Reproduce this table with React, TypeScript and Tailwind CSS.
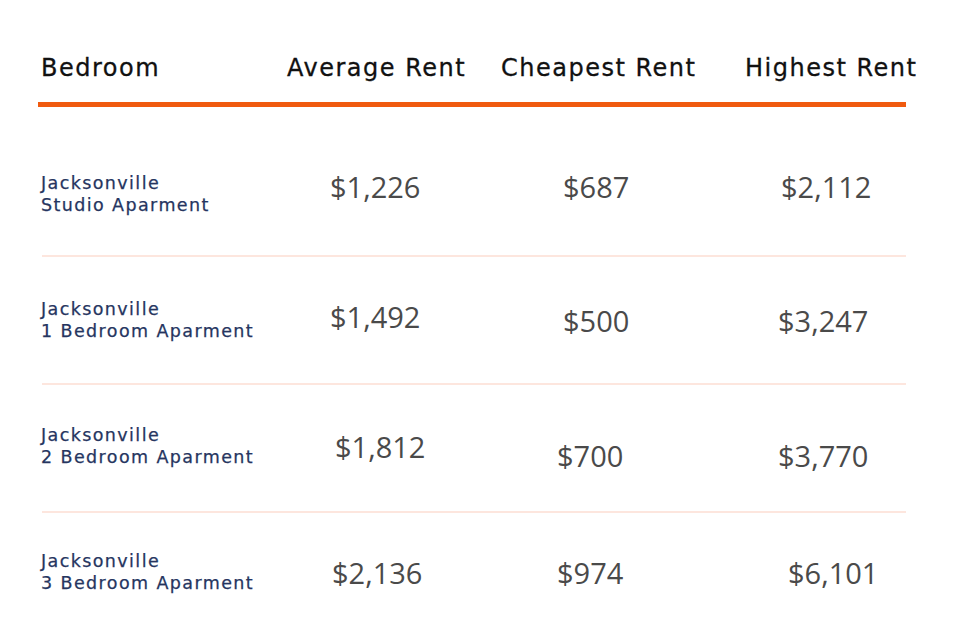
import React from "react";

type Cell = { v: string; ml: string; mt: string };
type Row = { h: string; pt: string; name: string; cells: Cell[] };

const rows: Row[] = [
  {
    h: "h-[148px]",
    pt: "pt-[65px]",
    name: "Studio Aparment",
    cells: [
      { v: "$1,226", ml: "ml-[43px]", mt: "mt-[62px]" },
      { v: "$687", ml: "ml-[62px]", mt: "mt-[62px]" },
      { v: "$2,112", ml: "ml-[36px]", mt: "mt-[62px]" },
    ],
  },
  {
    h: "h-[126px]",
    pt: "pt-[41px]",
    name: "1 Bedroom Aparment",
    cells: [
      { v: "$1,492", ml: "ml-[43px]", mt: "mt-[42px]" },
      { v: "$500", ml: "ml-[62px]", mt: "mt-[46px]" },
      { v: "$3,247", ml: "ml-[33px]", mt: "mt-[46px]" },
    ],
  },
  {
    h: "h-[126px]",
    pt: "pt-[39px]",
    name: "2 Bedroom Aparment",
    cells: [
      { v: "$1,812", ml: "ml-[48px]", mt: "mt-[44px]" },
      { v: "$700", ml: "ml-[56px]", mt: "mt-[53px]" },
      { v: "$3,770", ml: "ml-[33px]", mt: "mt-[53px]" },
    ],
  },
  {
    h: "h-[127px]",
    pt: "pt-[37px]",
    name: "3 Bedroom Aparment",
    cells: [
      { v: "$2,136", ml: "ml-[45px]", mt: "mt-[42px]" },
      { v: "$974", ml: "ml-[56px]", mt: "mt-[42px]" },
      { v: "$6,101", ml: "ml-[43px]", mt: "mt-[42px]" },
    ],
  },
];

const grid = "grid grid-cols-[246px_214px_244px_1fr]";
const sans = { fontFamily: '"DejaVu Sans", "Open Sans", sans-serif' };
const nums = { fontFamily: '"Open Sans", "Liberation Sans", sans-serif' };

export default function App() {
  return (
    <div className="w-[969px] h-[640px] bg-white overflow-hidden" style={sans}>
      <div
        className={`${grid} pl-[41px] pt-[50px] h-[102px] text-[24px] leading-[36px] tracking-[1.5px] text-[#111111] [-webkit-text-stroke:0.3px_#111111]`}
      >
        <div>Bedroom</div>
        <div>Average Rent</div>
        <div>Cheapest Rent</div>
        <div>Highest Rent</div>
      </div>
      <div className="ml-[38px] w-[868px] h-[5px] bg-[#f05a0f]" />
      {rows.map((r, i) => (
        <div key={i}>
          {i > 0 && <div className="ml-[42px] w-[864px] h-[2px] bg-[#fde6de]" />}
          <div className={`${grid} pl-[41px] ${r.h}`}>
            <div
              className={`${r.pt} text-[17.5px] leading-[22px] tracking-[1.4px] text-[#26355f] [-webkit-text-stroke:0.25px_#26355f]`}
            >
              <div>Jacksonville</div>
              <div>{r.name}</div>
            </div>
            {r.cells.map((c, j) => (
              <div
                key={j}
                className={`${c.ml} ${c.mt} text-[29px] leading-[36px] text-[#4a4a4a]`}
                style={nums}
              >
                {c.v}
              </div>
            ))}
          </div>
        </div>
      ))}
    </div>
  );
}
